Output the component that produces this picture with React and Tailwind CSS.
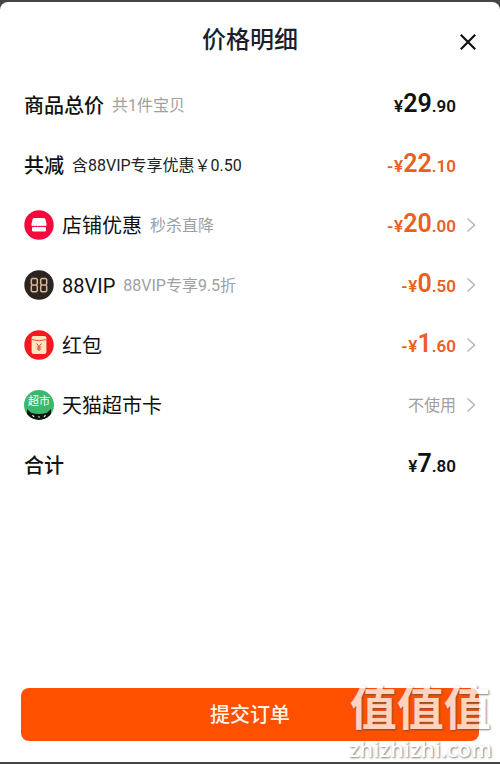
import React from "react";

function ShopIcon() {
  return (
    <svg viewBox="0 0 30 30" className="size-[30px] shrink-0" aria-hidden="true">
      <circle cx="15" cy="15" r="14.7" fill="#f5083c" />
      <path d="M10.300 8h9.400q1.300 0 1.700 1.200l1.100 4.600v1.600q-1 1.200-2.600.2-1.200 1-2.500 0-1.200 1-2.400 0-1.200 1-2.500 0-1.200 1-2.400 0-1.600 1-2.600-.2v-1.600l1.100-4.600Q9 8 10.300 8z" fill="#fff" />
      <path d="M8 17q1.500.6 2.900-.2 1.300.9 2.600 0 1.500.9 3 0 1.300.9 2.600 0 1.400.8 2.900.2v3.300q0 1.200-1.200 1.200H9.200Q8 21.500 8 20.300z" fill="#fff" />
    </svg>
  );
}

function VipIcon() {
  return (
    <svg viewBox="0 0 30 30" className="size-[30px] shrink-0" aria-hidden="true">
      <circle cx="15" cy="15" r="14.700" fill="#2b2522" />
      <g fill="none" stroke="#dcb592" strokeWidth="1.500" strokeLinejoin="round">
        <path d="M8.300 8.500h4l1 1v4.300L12.300 15l1 1.200v4.600l-1 1h-4l-1-1v-4.600l1-1.200-1-1.200V9.500zM8.300 15h4" />
        <path d="M17.700 8.500h4l1 1v4.300L21.700 15l1 1.200v4.600l-1 1h-4l-1-1v-4.600l1-1.200-1-1.200V9.500zM17.700 15h4" />
      </g>
    </svg>
  );
}

function PacketIcon() {
  return (
    <svg viewBox="0 0 30 30" className="size-[30px] shrink-0" aria-hidden="true">
      <circle cx="15" cy="15" r="14.700" fill="#f5191f" />
      <rect x="7.600" y="6" width="14.800" height="18" rx="2" fill="#ffe6c0" />
      <path d="M7.600 9.500q7.400 2.600 14.800 0" fill="none" stroke="#e8503a" strokeWidth="1" />
      <path d="M12.600 13.500l2.400 3 2.400-3M15 16.500V21M12.800 17h4.400M12.800 19h4.400" fill="none" stroke="#dc4637" strokeWidth="1" />
    </svg>
  );
}

function MarketIcon() {
  return (
    <span className="relative size-[30px] shrink-0 overflow-hidden rounded-full bg-[#3bb86c]">
      <svg viewBox="0 0 30 30" className="size-full" aria-hidden="true">
        <path d="M3 19l4 3.800q8 2.400 16 0l4-3.800v6q-4 5-12 5T3 25z" fill="#101512" />
        <path d="M8.500 25.200l1.500 1.600M21.500 25.200L20 26.800" stroke="#e9f7ee" strokeWidth="1.200" />
        <path d="M13.800 26.500h2.400L15 28z" fill="#e9f7ee" />
      </svg>
      <span className="absolute inset-x-0 top-[5px] text-center text-[11px] leading-[14px] text-white">超市</span>
    </span>
  );
}

function Price({ minus, whole, cents, tone = "text-[#111111]" }) {
  return (
    <span className={`flex items-baseline font-[Roboto,'Noto_Sans_CJK_SC',sans-serif] text-[17px] leading-7 font-semibold ${tone}`}>
      {minus && <span className="w-2 text-center">-</span>}
      <span>¥</span>
      <span className="text-[25px]">{whole}</span>
      <span>.{cents}</span>
    </span>
  );
}

function Row({ icon, label, note, noteTone = "text-[#a0a0a0]", strong, arrow, children }) {
  const content = (
    <>
      {icon && <span className="mr-2 flex">{icon}</span>}
      <span className={`pt-0.5 text-[20px] ${strong ? "font-medium" : ""}`}>{label}</span>
      {note && <span className={`ml-2 pt-0.5 text-base ${noteTone}`}>{note}</span>}
      <span className="ml-auto flex items-center">{children}</span>
      <span className="flex w-6 justify-end">
        {arrow && (
          <svg viewBox="0 0 10 16" className="mr-1 h-4 w-[10px]" fill="none" stroke="#b8b8b8" strokeWidth="1.600" aria-hidden="true">
            <path d="M1.500 1.500L8.500 8L1.500 14.500" />
          </svg>
        )}
      </span>
    </>
  );
  const look = "flex h-[60px] w-full items-center text-left whitespace-nowrap";
  return (
    <li>
      {arrow ? <button type="button" className={look}>{content}</button> : <div className={look}>{content}</div>}
    </li>
  );
}

export default function App() {
  const orange = "text-[#e9601f]";
  return (
    <div className="relative flex min-h-screen flex-col bg-[#454545] pt-0.5 pb-0.5 font-[Roboto,'Noto_Sans_CJK_SC',sans-serif] text-[#111111]">
      <main className="flex grow flex-col rounded-t-lg bg-white">
        <header className="grid h-[73px] grid-cols-[1fr_auto_1fr] items-center px-5">
          <h1 className="col-start-2 pt-0.5 text-2xl font-medium text-[#1c1f2b]">价格明细</h1>
          <button type="button" aria-label="关闭" className="mt-1.5 justify-self-end p-1">
            <svg viewBox="0 0 16 16" className="size-4" fill="none" stroke="#111111" strokeWidth="2.200" aria-hidden="true">
              <path d="M.8.8l14.400 14.400M15.200.8L.8 15.200" />
            </svg>
          </button>
        </header>
        <ul className="px-5 pl-6">
          <Row strong label="商品总价" note="共1件宝贝"><Price whole="29" cents="90" /></Row>
          <Row strong label="共减" note="含88VIP专享优惠￥0.50" noteTone="text-[#222222]"><Price minus whole="22" cents="10" tone={orange} /></Row>
          <Row arrow icon={<ShopIcon />} label="店铺优惠" note="秒杀直降"><Price minus whole="20" cents="00" tone={orange} /></Row>
          <Row arrow icon={<VipIcon />} label="88VIP" note="88VIP专享9.5折"><Price minus whole="0" cents="50" tone={orange} /></Row>
          <Row arrow icon={<PacketIcon />} label="红包"><Price minus whole="1" cents="60" tone={orange} /></Row>
          <Row arrow icon={<MarketIcon />} label="天猫超市卡"><span className="pt-0.5 text-base text-[#a0a0a0]">不使用</span></Row>
          <Row strong label="合计"><Price whole="7" cents="80" /></Row>
        </ul>
        <footer className="mt-auto px-[21px] pb-[21px]">
          <button type="button" className="h-[53px] w-full rounded-lg bg-[#ff5000] text-[20px] font-medium text-[#fff3e6]">提交订单</button>
        </footer>
      </main>
      <div className="pointer-events-none absolute right-2 bottom-1 flex flex-col items-center text-white opacity-75 [text-shadow:1px_1px_2px_rgba(70,70,70,0.9)]">
        <span className="text-[47px] leading-[54px] font-bold">值值值</span>
        <span className="font-['Open_Sans',sans-serif] text-[22px] leading-6 font-semibold">zhizhizhi.com</span>
      </div>
    </div>
  );
}
